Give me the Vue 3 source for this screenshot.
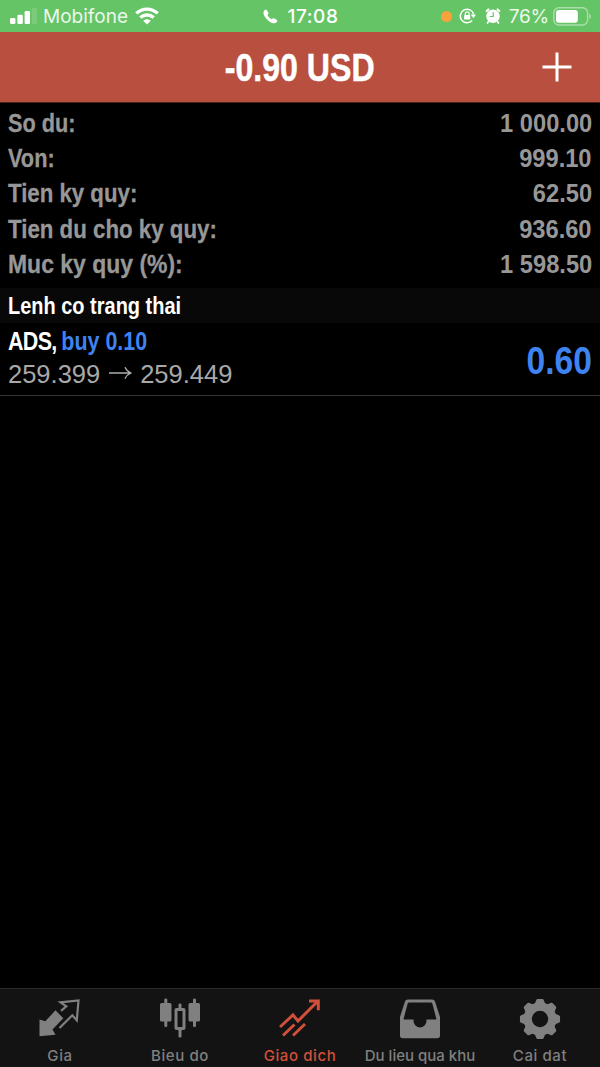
<template>
  <div class="screen">
    <header class="status-bar">
      <div class="status-left">
        <svg class="signal" width="27" height="18" viewBox="0 0 27 18">
          <rect x="0" y="11" width="5.4" height="6" rx="1.3" fill="#fff" />
          <rect x="7.4" y="7.7" width="5.4" height="9.3" rx="1.3" fill="#fff" />
          <rect x="14.6" y="4" width="5.4" height="13" rx="1.3" fill="#fff" />
          <rect x="21.8" y="1" width="5" height="16" rx="1.3" fill="#fff" opacity="0.15" />
        </svg>
        <span class="carrier">Mobifone</span>
        <svg class="wifi" width="24" height="18" viewBox="0 0 24 18">
          <g fill="none" stroke="#fff" stroke-width="3.3">
            <path d="M1.3 6.4C7.4 .6 16.6 .6 22.7 6.4" />
            <path d="M5.3 10.6c3.9-3.5 9.5-3.5 13.4 0" />
          </g>
          <path d="M8.2 13.8c2.2-2 5.4-2 7.6 0L12 17.6z" fill="#fff" />
        </svg>
      </div>
      <div class="status-center">
        <svg width="15" height="15" viewBox="0 0 15 15">
          <path
            d="M1.3 1.4C2.3.3 3.3.4 4 1.4l1.2 1.8c.5.8.4 1.4-.2 2l-.6.7c.7 1.6 2.7 3.6 4.4 4.4l.8-.7c.6-.5 1.2-.6 1.9-.1l2 1.3c1 .7 1 1.6.1 2.5-1.6 1.6-4.4 1.3-7.6-1.1C3 9.9.6 6.7.4 4 .3 3 .6 2.1 1.3 1.4z"
            fill="#fff"
          />
        </svg>
        <span class="clock">17:08</span>
      </div>
      <div class="status-right">
        <i class="mic-dot"></i>
        <svg class="lock" width="18" height="18" viewBox="0 0 18 18">
          <path d="M13.2 13.6A6.8 6.8 0 1 1 14.7 7.2" fill="none" stroke="#fff" stroke-width="1.5" />
          <path d="M11.8 7.6h5.2l-2.5 3.7z" fill="#fff" />
          <rect x="5.1" y="7.9" width="6.2" height="4.7" rx=".7" fill="#fff" />
          <path d="M6.3 8.3V6.7a1.9 1.9 0 0 1 3.8 0v1.6" fill="none" stroke="#fff" stroke-width="1.2" />
        </svg>
        <svg class="alarm" width="16" height="16" viewBox="0 0 16 16">
          <circle cx="8" cy="8.2" r="6.7" fill="#fff" />
          <path d="M1.8 3 3.4 1.5M14.2 3l-1.6-1.5" stroke="#fff" stroke-width="2.2" stroke-linecap="round" />
          <path d="M3.7 13.3 2.5 15M12.3 13.3l1.2 1.7" stroke="#fff" stroke-width="1.8" stroke-linecap="round" />
          <path d="M8.2 4.2v4.3H4.8" fill="none" stroke="#65c466" stroke-width="1.2" />
        </svg>
        <span class="percent">76%</span>
        <svg class="battery" width="39" height="19" viewBox="0 0 39 19">
          <rect x=".8" y=".8" width="33.8" height="17.2" rx="5" fill="none" stroke="#fff" stroke-width="1.4" opacity=".45" />
          <path d="M36.3 6.5c2 .8 2 5 0 5.8z" fill="#fff" opacity=".5" />
          <rect x="3" y="3" width="21.8" height="12.8" rx="2.8" fill="#fff" />
        </svg>
      </div>
    </header>

    <div class="title-bar">
      <h1 class="title">-0.90 USD</h1>
      <button class="add-btn" aria-label="add">
        <svg width="30" height="30" viewBox="0 0 30 30">
          <path d="M15 .5v29M.5 15h29" stroke="#fff" stroke-width="3" />
        </svg>
      </button>
    </div>

    <main class="content">
      <dl class="account">
        <div v-for="row in account" :key="row.label" class="account-row">
          <dt :style="{ transform: `scaleX(${row.stretch})` }">{{ row.label }}</dt>
          <dd>{{ row.value }}</dd>
        </div>
      </dl>

      <h2 class="section"><span>Lenh co trang thai</span></h2>

      <div v-for="p in positions" :key="p.symbol" class="position">
        <div class="position-info">
          <div class="deal"><span class="symbol">{{ p.symbol }},</span> <span class="buy">{{ p.side }} {{ p.volume }}</span></div>
          <div class="prices">
            <span>{{ p.open }}</span>
            <svg width="24" height="16" viewBox="0 0 24 16">
              <path d="M1 7h22M17 1.200q2 4.300 6 5.800q-4 1.500-6 5.800" fill="none" stroke="#adadad" stroke-width="1.300" />
            </svg>
            <span>{{ p.current }}</span>
          </div>
        </div>
        <div class="profit">{{ p.profit }}</div>
      </div>
    </main>

    <nav class="tab-bar">
      <a v-for="tab in tabs" :key="tab.id" :class="['tab', tab.id, { active: tab.id === activeTab }]" @click="activeTab = tab.id">
        <svg width="42" height="42" viewBox="0 0 42 42">
          <template v-if="tab.id === 'quotes'">
            <path d="M.5 21.500 6.300 23.300 16.500 12.300 24.300 20.300 13.500 31.500 16.500 36.700 .5 38.300z" fill="currentColor" />
            <path d="M22 12.800 27.300 8.300 21.500 4.300 39.500 2.500 37.800 22.300 33.300 17.300 20.500 30" fill="none" stroke="currentColor" stroke-width="2.200" />
          </template>
          <template v-else-if="tab.id === 'chart'">
            <g fill="currentColor">
              <rect x="1" y="5" width="11.5" height="18.5" rx="1.5" />
              <rect x="5.3" y="0.5" width="3" height="28.5" rx="1.3" />
              <rect x="29.5" y="5" width="11.5" height="18.5" rx="1.5" />
              <rect x="34" y="0.5" width="3" height="28.5" rx="1.3" />
              <rect x="19.5" y="5.5" width="3" height="6" rx="1.3" />
              <rect x="19.5" y="31" width="3" height="8.5" rx="1.3" />
            </g>
            <rect x="17" y="11.5" width="8" height="19" rx=".5" fill="none" stroke="currentColor" stroke-width="3" />
          </template>
          <template v-else-if="tab.id === 'trade'">
            <g fill="none" stroke="currentColor" stroke-width="3">
              <path d="M1 29 14 17l5 6L39 3" />
              <path d="M30 3h9.300v9.300" />
              <path d="M4 37.500 15.500 26.500M14 37.500 26 26" />
            </g>
          </template>
          <template v-else-if="tab.id === 'history'">
            <path
              fill="currentColor"
              fill-rule="evenodd"
              d="M9 1.5h24c1.500 0 2.600.8 3.100 2.200L41 19v18.500q0 2.800-2.800 2.800H3.800Q1 40.300 1 37.500V19L5.900 3.700C6.400 2.300 7.500 1.500 9 1.500zM10.200 4.500Q9 4.500 8.600 5.700L4.700 20.500q-.3 1 .8 1H14.500v1.500a6.500 6.500 0 0 0 13 0v-1.500h9q1.100 0 .8-1L33.400 5.700q-.4-1.200-1.600-1.200z"
            />
          </template>
          <template v-else>
            <path :d="gearPath" fill="currentColor" fill-rule="evenodd" stroke="currentColor" stroke-width="2.4" stroke-linejoin="round" />
          </template>
        </svg>
        <span>{{ tab.label }}</span>
      </a>
    </nav>
  </div>
</template>

<script setup>
import { ref } from 'vue'

const account = [
  { label: 'So du:', value: '1 000.00', stretch: 0.835 },
  { label: 'Von:', value: '999.10', stretch: 0.835 },
  { label: 'Tien ky quy:', value: '62.50', stretch: 0.855 },
  { label: 'Tien du cho ky quy:', value: '936.60', stretch: 0.857 },
  { label: 'Muc ky quy (%):', value: '1 598.50', stretch: 0.883 }
]

const positions = [
  { symbol: 'ADS', side: 'buy', volume: '0.10', open: '259.399', current: '259.449', profit: '0.60' }
]

const tabs = [
  { id: 'quotes', label: 'Gia' },
  { id: 'chart', label: 'Bieu do' },
  { id: 'trade', label: 'Giao dich' },
  { id: 'history', label: 'Du lieu qua khu' },
  { id: 'settings', label: 'Cai dat' }
]

const activeTab = ref('trade')

// gear with 8 teeth and a round hole
const buildGear = (c, outer, inner) => {
  const pts = []
  for (let i = 0; i < 8; i++) {
    const a = (i * Math.PI) / 4 - Math.PI / 2
    const steps = [[-0.27, inner], [-0.13, outer], [0.13, outer], [0.27, inner]]
    steps.forEach(([d, r]) => {
      pts.push(`${(c + r * Math.cos(a + d)).toFixed(2)} ${(c + r * Math.sin(a + d)).toFixed(2)}`)
    })
  }
  return `M${pts.join('L')}ZM30.4 ${c}a9.4 9.4 0 1 0-18.8 0a9.4 9.4 0 1 0 18.800 0z`
}
const gearPath = buildGear(21, 19, 15.4)
</script>

<style>
body {
  background: #000;
}
</style>

<style scoped>
.screen {
  width: 600px;
  height: 1067px;
  display: flex;
  flex-direction: column;
  overflow: hidden;
  background: #000;
  font-family: "Liberation Sans", sans-serif;
}

.status-bar {
  height: 32px;
  flex: none;
  display: grid;
  grid-template-columns: 1fr auto 1fr;
  align-items: center;
  padding: 0 8px 0 10px;
  box-sizing: border-box;
  background: #65c466;
  color: #fff;
  font-family: Inter, sans-serif;
  font-size: 19px;
}

.status-left,
.status-center,
.status-right {
  display: flex;
  align-items: center;
}

.carrier {
  margin-left: 6px;
  letter-spacing: 0;
  color: #ecf8ec;
}

.wifi {
  margin-left: 7px;
}

.clock {
  margin-left: 9px;
  font-weight: 500;
  letter-spacing: 0.6px;
}

.status-right {
  justify-content: flex-end;
}

.mic-dot {
  width: 11px;
  height: 11px;
  border-radius: 50%;
  background: #f7a23b;
}

.lock {
  margin-left: 7px;
}

.alarm {
  margin-left: 8px;
}

.percent {
  margin: 0 4px 0 8px;
  letter-spacing: -0.2px;
  color: #ecf8ec;
}

.title-bar {
  height: 71px;
  flex: none;
  display: grid;
  grid-template-columns: 1fr auto 1fr;
  align-items: center;
  background: #b94f3f;
  border-bottom: 1px solid #4a2019;
  box-sizing: border-box;
}

.title {
  grid-column: 2;
  margin: 2px 0 0;
  font-size: 38px;
  line-height: 44px;
  font-weight: 700;
  color: #fff;
  -webkit-text-stroke: 0.5px #fff;
  transform: scaleX(0.845);
}

.add-btn {
  justify-self: end;
  margin: 0 28px 1px 0;
  padding: 0;
  border: none;
  background: none;
  line-height: 0;
}

.content {
  flex: 1;
}

.account {
  margin: 0;
  padding: 3px 8px 6px;
}

.account-row {
  height: 35.2px;
  display: flex;
  justify-content: space-between;
  align-items: center;
  font-size: 26px;
  font-weight: 700;
  color: #979797;
  white-space: nowrap;
}

.account-row dt {
  transform-origin: left;
  -webkit-text-stroke: 0.3px #979797;
}

.account-row dd {
  margin: 0;
  transform: scaleX(0.91);
  transform-origin: right;
}

.section {
  margin: 0;
  height: 35px;
  padding: 1px 8px 0;
  box-sizing: border-box;
  background: #080808;
  font-size: 23.5px;
  line-height: 35px;
  color: #fff;
}

.section span {
  display: inline-block;
  transform: scaleX(0.85);
  transform-origin: left;
}

.position {
  height: 73px;
  padding: 1px 8px 0;
  box-sizing: border-box;
  display: flex;
  justify-content: space-between;
  align-items: center;
  border-bottom: 1px solid #353535;
}

.position-info {
  height: 100%;
}

.deal {
  font-size: 26px;
  line-height: 34px;
  font-weight: 700;
  color: #fff;
  transform: scaleX(0.825);
  transform-origin: left;
}

.symbol {
  letter-spacing: -0.8px;
  margin-right: -1.5px;
}

.buy {
  color: #3f83f0;
}

.prices {
  display: flex;
  align-items: center;
  gap: 8px;
  font-size: 25.5px;
  line-height: 32px;
  color: #a8a8a8;
}

.profit {
  margin-top: 4px;
  font-size: 38px;
  font-weight: 700;
  color: #3f83f0;
  transform: scaleX(0.885);
  transform-origin: right;
}

.tab-bar {
  height: 79px;
  flex: none;
  display: grid;
  grid-template-columns: repeat(5, 1fr);
  border-top: 1px solid #2b2b2b;
  box-sizing: border-box;
  background: #131313;
}

.tab {
  display: flex;
  flex-direction: column;
  align-items: center;
  padding-top: 9px;
  color: #808080;
  font-family: Inter, sans-serif;
  font-size: 15px;
  font-weight: 500;
  line-height: 18px;
  letter-spacing: 0.6px;
  white-space: nowrap;
}

.tab svg {
  margin-bottom: 7px;
}

.tab.history {
  letter-spacing: 0;
}

.tab.active {
  color: #d1503a;
}
</style>
